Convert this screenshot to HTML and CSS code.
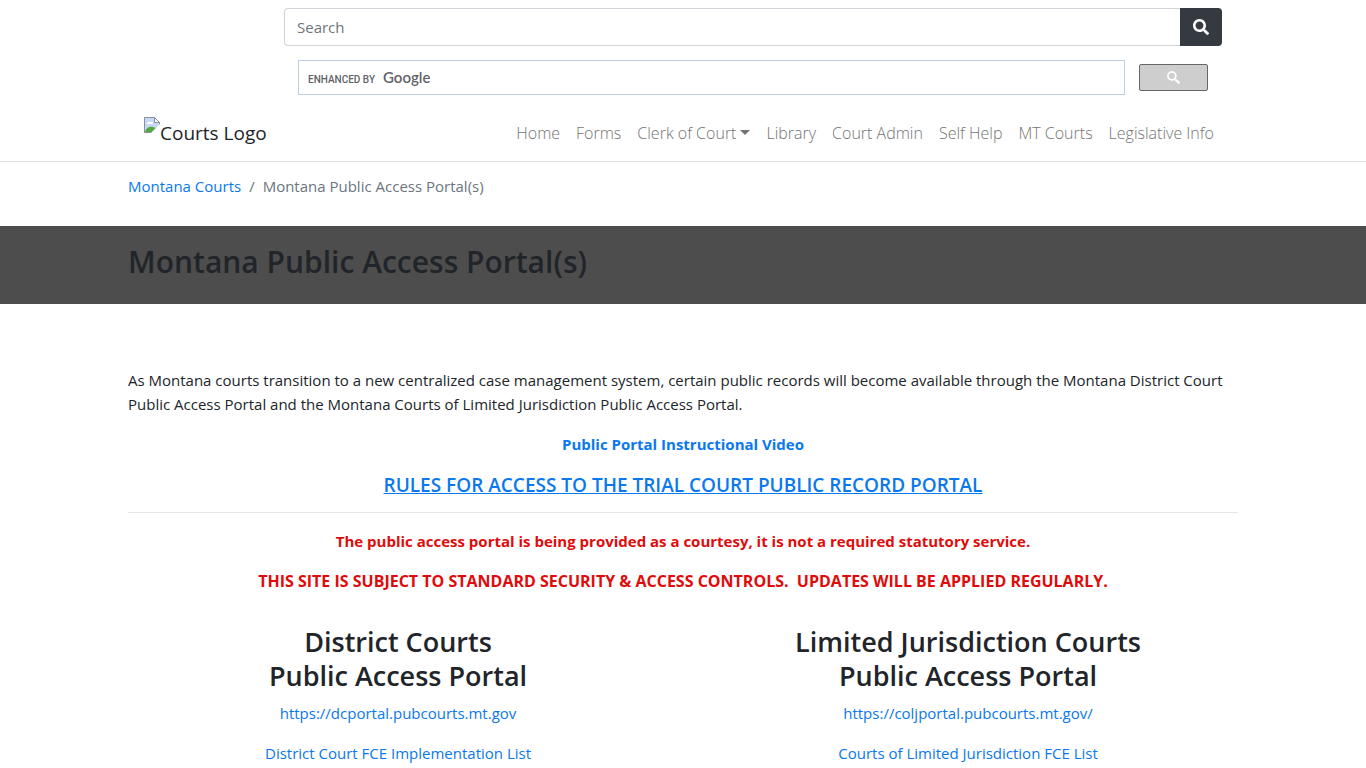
FILE: index.html
```
<!DOCTYPE html>
<html lang="en">
<head>
    <meta charset="UTF-8">
    <meta name="viewport" content="width=device-width, initial-scale=1.0">
    <title>Montana Public Access Portal(s)</title>
    <link rel="stylesheet" href="styles.css">
</head>
<body>
    <header class="site-header">
        <div class="container header-inner">
            <div class="search-area">
                <form class="site-search">
                    <input type="search" placeholder="Search" aria-label="Search">
                    <button type="submit" aria-label="Submit search">
                        <svg width="16" height="16" viewBox="0 0 512 512" fill="currentColor"><path d="M505 442.7L405.3 343c-4.500-4.500-10.600-7-17-7H372c27.600-35.300 44-79.700 44-128C416 93.100 322.900 0 208 0S0 93.100 0 208s93.100 208 208 208c48.300 0 92.700-16.400 128-44v16.300c0 6.400 2.500 12.500 7 17l99.700 99.700c9.400 9.400 24.600 9.400 33.900 0l28.300-28.300c9.400-9.400 9.400-24.600.1-34zM208 336c-70.700 0-128-57.200-128-128 0-70.700 57.200-128 128-128 70.700 0 128 57.200 128 128 0 70.700-57.200 128-128 128z"/></svg>
                    </button>
                </form>
                <form class="google-search">
                    <div class="google-box">
                        <label for="gsc">ENHANCED BY <span>Google</span></label>
                        <input id="gsc" type="text">
                    </div>
                    <button type="submit" aria-label="Google search">
                        <svg width="13" height="13" viewBox="0 0 13 13" fill="currentColor"><path d="M4.800 0a4.800 4.800 0 1 0 2.600 8.900l3.500 3.600a1 1 0 0 0 1.500 0l.2-.2a1 1 0 0 0 0-1.400L8.900 7.400A4.800 4.800 0 0 0 4.800 0zm0 1.700a3.100 3.100 0 1 1 0 6.200 3.100 3.100 0 0 1 0-6.200z"/></svg>
                    </button>
                </form>
            </div>
            <nav class="navbar">
                <a class="brand" href="#">
                    <svg width="16" height="16" viewBox="0 0 16 16">
                        <path d="M.5.5h10l5 5v10H.5z" fill="#c5d9f7" stroke="#8c9097"/>
                        <path d="M3 7a2 2 0 0 1 3-2 2 2 0 0 1 3 2z" fill="#fff"/>
                        <path d="M1 15c1-4 4-6 8-5l3 1-4 4z" fill="#53a93f"/>
                        <path d="M10.500.5v5h5z" fill="#fff" stroke="#8c9097"/>
                        <path d="M16 7v9H7l9-9z" fill="#fff"/>
                    </svg><span>Courts Logo</span>
                </a>
                <ul class="nav-links">
                    <li><a href="#">Home</a></li>
                    <li><a href="#">Forms</a></li>
                    <li><a href="#" class="dropdown">Clerk of Court</a></li>
                    <li><a href="#">Library</a></li>
                    <li><a href="#">Court Admin</a></li>
                    <li><a href="#">Self Help</a></li>
                    <li><a href="#">MT Courts</a></li>
                    <li><a href="#">Legislative Info</a></li>
                </ul>
            </nav>
        </div>
    </header>

    <nav class="container" aria-label="breadcrumb">
        <ol class="breadcrumb">
            <li><a href="#">Montana Courts</a></li>
            <li>Montana Public Access Portal(s)</li>
        </ol>
    </nav>

    <div class="title-band">
        <div class="container">
            <h1>Montana Public Access Portal(s)</h1>
        </div>
    </div>

    <main class="container content">
        <p>As Montana courts transition to a new centralized case management system, certain public records will become available through the Montana District Court Public Access Portal and the Montana Courts of Limited Jurisdiction Public Access Portal.</p>
        <p class="center"><a class="video" href="#">Public Portal Instructional Video</a></p>
        <h2 class="rules"><a href="#">RULES FOR ACCESS TO THE TRIAL COURT PUBLIC RECORD PORTAL</a></h2>
        <hr>
        <p class="notice">The public access portal is being provided as a courtesy, it is not a required statutory service.</p>
        <p class="notice notice-large">THIS SITE IS SUBJECT TO STANDARD SECURITY &amp; ACCESS CONTROLS.&nbsp; UPDATES WILL BE APPLIED REGULARLY.</p>

        <div class="portals">
            <section>
                <h3>District Courts<br>Public Access Portal</h3>
                <p><a href="#">https://dcportal.pubcourts.mt.gov</a></p>
                <p><a href="#">District Court FCE Implementation List</a></p>
            </section>
            <section>
                <h3>Limited Jurisdiction Courts<br>Public Access Portal</h3>
                <p><a href="#">https://coljportal.pubcourts.mt.gov/</a></p>
                <p><a href="#">Courts of Limited Jurisdiction FCE List</a></p>
            </section>
        </div>
    </main>
</body>
</html>
```
FILE: styles.css
```
* {
    box-sizing: border-box;
}
body {
    margin: 0;
    font-family: "Open Sans", "Noto Sans", sans-serif;
    font-size: 15px;
    line-height: 24px;
    color: #212529;
    background: #fff;
}
a {
    color: #0a78ee;
    text-decoration: none;
}
a:hover {
    text-decoration: underline;
}
p {
    margin: 0 0 16px;
}
h1, h2, h3 {
    margin: 0 0 8px;
    font-weight: 600;
}
.container {
    width: 100%;
    max-width: 1140px;
    margin: 0 auto;
    padding: 0 15px;
}

/* header */
.site-header {
    padding: 8px 0;
    border-bottom: 1px solid #dee2e6;
}
.header-inner {
    padding: 0 31px;
}
.search-area {
    margin-left: 140px;
}
.site-search {
    display: flex;
}
.site-search input {
    flex: 1;
    min-width: 0;
    height: 38px;
    padding: 6px 12px;
    border: 1px solid #ced4da;
    border-right: 0;
    border-radius: 4px 0 0 4px;
    font: inherit;
}
.site-search input::placeholder {
    color: #6c757d;
}
.site-search button {
    display: flex;
    align-items: center;
    justify-content: center;
    width: 42px;
    border: 0;
    border-radius: 0 4px 4px 0;
    background: #343a40;
    color: #fff;
}
.google-search {
    display: flex;
    align-items: center;
    gap: 14px;
    padding: 14px 14px 18px;
}
.google-box {
    display: flex;
    flex: 1;
    align-items: center;
    height: 35px;
    padding: 0 9px 2px;
    border: 1px solid #bccde6;
}
.google-box label {
    display: flex;
    align-items: baseline;
    gap: 8px;
    font: 500 10px Roboto, sans-serif;
    color: #5f6368;
}
.google-box span {
    font: 600 15px Lato, sans-serif;
}
.google-box input {
    flex: 1;
    min-width: 0;
    border: 0;
    outline: 0;
}
.google-search button {
    width: 69px;
    height: 27px;
    padding: 0;
    border: 1px solid #666;
    border-radius: 2px;
    background: #cecece;
    color: #fff;
}
.google-search svg {
    display: block;
    margin: 0 auto;
}
.navbar {
    display: flex;
    flex-wrap: wrap;
    align-items: center;
    justify-content: space-between;
}
.brand {
    display: flex;
    align-items: flex-start;
    font-size: 19px;
    line-height: 32px;
    color: #212529;
}
.nav-links {
    display: flex;
    flex-wrap: wrap;
    margin: 0;
    padding: 0;
    list-style: none;
}
.nav-links a {
    display: block;
    padding: 8px;
    color: #737373;
    font-size: 16px;
    font-weight: 300;
}
.dropdown::after {
    content: "";
    display: inline-block;
    margin-left: 4px;
    vertical-align: 4px;
    border-top: 5px solid;
    border-left: 5px solid transparent;
    border-right: 5px solid transparent;
}

.breadcrumb {
    display: flex;
    flex-wrap: wrap;
    margin: 0 0 16px;
    padding: 12px 0;
    list-style: none;
    color: #6c757d;
}
.breadcrumb li + li::before {
    content: "/";
    padding: 0 8px;
}

.title-band {
    padding: 16px 0;
    background: #4d4d4e;
}
.title-band h1 {
    font-size: 30px;
    line-height: 40px;
    margin-bottom: 6px;
}

.content {
    padding-top: 64px;
}
.center {
    text-align: center;
}
.video {
    font-weight: 700;
}
.rules {
    margin: 17px 0 15px;
    text-align: center;
    font-size: 19px;
    line-height: 24px;
}
.rules a {
    text-decoration: underline;
}
hr {
    margin: 0 0 16px;
    border: 0;
    border-top: 1px solid #e5e5e5;
}
.notice {
    text-align: center;
    font-weight: 700;
    color: #e00b0b;
}
.notice-large {
    font-size: 16px;
}
.portals {
    display: grid;
    grid-template-columns: 1fr 1fr;
    gap: 30px;
    padding-top: 16px;
    text-align: center;
}
.portals h3 {
    font-size: 27px;
    line-height: 34px;
}
```
